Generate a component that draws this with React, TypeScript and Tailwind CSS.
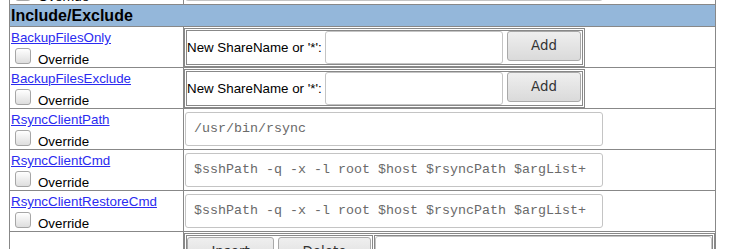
import React from "react";

const line = "border-[#888]";

const Checkbox = () => (
  <span className="ml-[4px] mt-[3px] inline-block h-4 w-4 shrink-0 rounded-[3px] border border-[#a6a6a6] bg-linear-to-b from-white to-[#dedede]" />
);

const NameCell = ({ name }: { name: string }) => (
  <div className={`w-[174px] shrink-0 border-r ${line} px-[1px] pt-[3px]`}>
    <a href="#" className="block leading-[15px] text-[#2b2bf0] underline">
      {name}
    </a>
    <div className="flex items-start">
      <Checkbox />
      <span className="ml-[7px] mt-[7px] leading-[15px]">Override</span>
    </div>
  </div>
);

const Button = ({ label, className }: { label: string; className: string }) => (
  <button
    className={`rounded-[3px] border border-[#a9a9a9] bg-linear-to-b from-[#efefef] to-[#dadada] font-['DejaVu_Sans',sans-serif] text-[13.33px] text-[#333] ${className}`}
  >
    {label}
  </button>
);

const ShareRow = ({ name }: { name: string }) => (
  <div className={`flex h-[41px] border-b ${line}`}>
    <NameCell name={name} />
    <div className="flex-1 pt-[1px]">
      <div className={`h-[39px] w-[401px] border ${line} p-[1px]`}>
        <div className={`flex h-full items-start border ${line}`}>
          <span className="w-[135px] shrink-0 self-center whitespace-nowrap leading-[15px]">
            New ShareName or '*':
          </span>
          <input
            type="text"
            className="ml-[3px] h-[33px] w-[178px] shrink-0 rounded-[3px] border border-[#c4c4c4] bg-white outline-none"
          />
          <Button label="Add" className="ml-[4px] h-[30px] w-[74px] shrink-0" />
        </div>
      </div>
    </div>
  </div>
);

const TextRow = ({ name, value }: { name: string; value: string }) => (
  <div className={`flex h-[41px] border-b ${line}`}>
    <NameCell name={name} />
    <div className="flex-1 pl-[1px] pt-[3px]">
      <div className="flex h-[34px] w-[418px] items-center overflow-hidden whitespace-nowrap rounded-[3px] border border-[#c4c4c4] bg-white pl-[8px] font-['Liberation_Mono',monospace] text-[13.33px] text-[#6a6a6a]">
        {value}
      </div>
    </div>
  </div>
);

export default function App() {
  return (
    <div className="h-[249px] overflow-hidden bg-white font-['Liberation_Sans',Arial,sans-serif] text-[13.33px] text-black">
      <div className={`-mt-[36px] ml-[9px] w-[707px] border-x ${line}`}>
        <TextRow name="ClientCharsetLegacy" value="iso-8859-1" />
        <div className={`h-[22px] border-b ${line} bg-[#94b7da] pl-[1px] text-[16px] font-bold leading-[21px]`}>
          Include/Exclude
        </div>
        <ShareRow name="BackupFilesOnly" />
        <ShareRow name="BackupFilesExclude" />
        <TextRow name="RsyncClientPath" value="/usr/bin/rsync" />
        <TextRow name="RsyncClientCmd" value="$sshPath -q -x -l root $host $rsyncPath $argList+" />
        <TextRow name="RsyncClientRestoreCmd" value="$sshPath -q -x -l root $host $rsyncPath $argList+" />
        <div className="flex h-[80px]">
          <div className={`w-[174px] shrink-0 border-r ${line}`} />
          <div className="flex-1 pt-[1px]">
            <div className={`flex h-[70px] w-[531px] gap-[1px] border ${line} p-[1px]`}>
              <div className={`flex w-[187px] shrink-0 items-start border ${line}`}>
                <Button label="Insert" className="mt-[1px] h-[30px] w-[87px] shrink-0" />
                <Button label="Delete" className="ml-[4px] mt-[1px] h-[30px] w-[93px] shrink-0" />
              </div>
              <div className={`flex-1 border ${line}`}>
                <textarea className="h-[60px] w-full resize-none rounded-[3px] border border-[#c4c4c4] bg-white outline-none" />
              </div>
            </div>
          </div>
        </div>
      </div>
    </div>
  );
}
